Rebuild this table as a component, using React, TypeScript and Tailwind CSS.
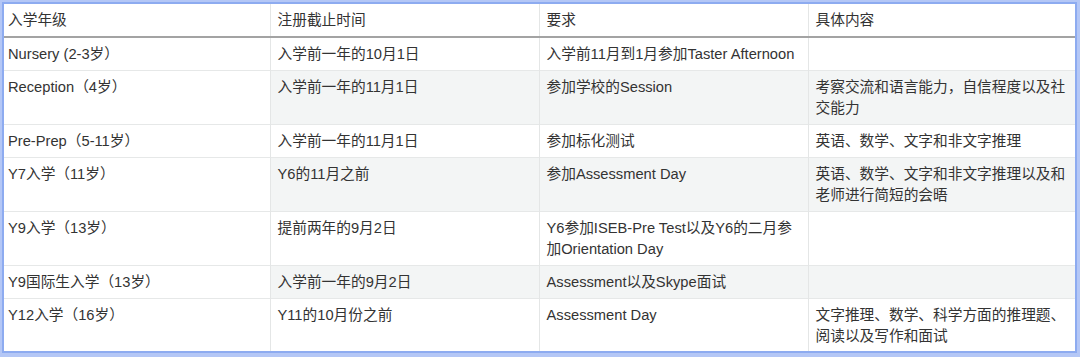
const rows = [
  ["Nursery (2-3岁）", "入学前一年的10月1日", "入学前11月到1月参加Taster Afternoon", ""],
  ["Reception（4岁）", "入学前一年的11月1日", "参加学校的Session", "考察交流和语言能力，自信程度以及社交能力"],
  ["Pre-Prep（5-11岁）", "入学前一年的11月1日", "参加标化测试", "英语、数学、文字和非文字推理"],
  ["Y7入学（11岁）", "Y6的11月之前", "参加Assessment Day", "英语、数学、文字和非文字推理以及和老师进行简短的会晤"],
  ["Y9入学（13岁）", "提前两年的9月2日", "Y6参加ISEB-Pre Test以及Y6的二月参加Orientation Day", ""],
  ["Y9国际生入学（13岁）", "入学前一年的9月2日", "Assessment以及Skype面试", ""],
  ["Y12入学（16岁）", "Y11的10月份之前", "Assessment Day", "文字推理、数学、科学方面的推理题、阅读以及写作和面试"],
]

const headers = ["入学年级", "注册截止时间", "要求", "具体内容"]

export default function App() {
  return (
    <div className="w-[1080px] h-[357px] bg-[#b4c7f6] p-[2px] pb-[4px] pr-[3px]">
      <div
        className="w-full h-full bg-white border-2 border-[#8dabf0] overflow-hidden text-[14.7px] leading-[21px] text-[#333]"
        style={{ fontFamily: '"Liberation Sans", "Noto Sans CJK SC", sans-serif' }}
      >
        <table className="table-fixed border-collapse w-[1071px]">
          <colgroup>
            <col className="w-[266px]" />
            <col className="w-[269px]" />
            <col className="w-[269px]" />
            <col className="w-[267px]" />
          </colgroup>
          <thead>
            <tr className="border-b-2 border-[#a3a3a3]">
              {headers.map((h, i) => (
                <th
                  key={i}
                  className={`text-left font-normal h-[32px] pt-[6px] pb-[5px] align-top ${i === 0 ? "pl-[4px] pr-2" : "px-[7px] border-l border-[#e4e6e6]"}`}
                >
                  {h}
                </th>
              ))}
            </tr>
          </thead>
          <tbody>
            {rows.map((row, r) => (
              <tr key={r} className="border-b border-[#e6e8e8]">
                {row.map((cell, c) => (
                  <td
                    key={c}
                    className={`align-top pt-[6px] pb-[5px] ${
                      c === 0
                        ? "pl-[4px] pr-2 bg-white"
                        : `px-[7px] border-l border-[#e4e6e6] ${r % 2 === 1 ? "bg-[#f3f5f5]" : "bg-white"}`
                    }`}
                  >
                    {cell}
                  </td>
                ))}
              </tr>
            ))}
          </tbody>
        </table>
      </div>
    </div>
  )
}
